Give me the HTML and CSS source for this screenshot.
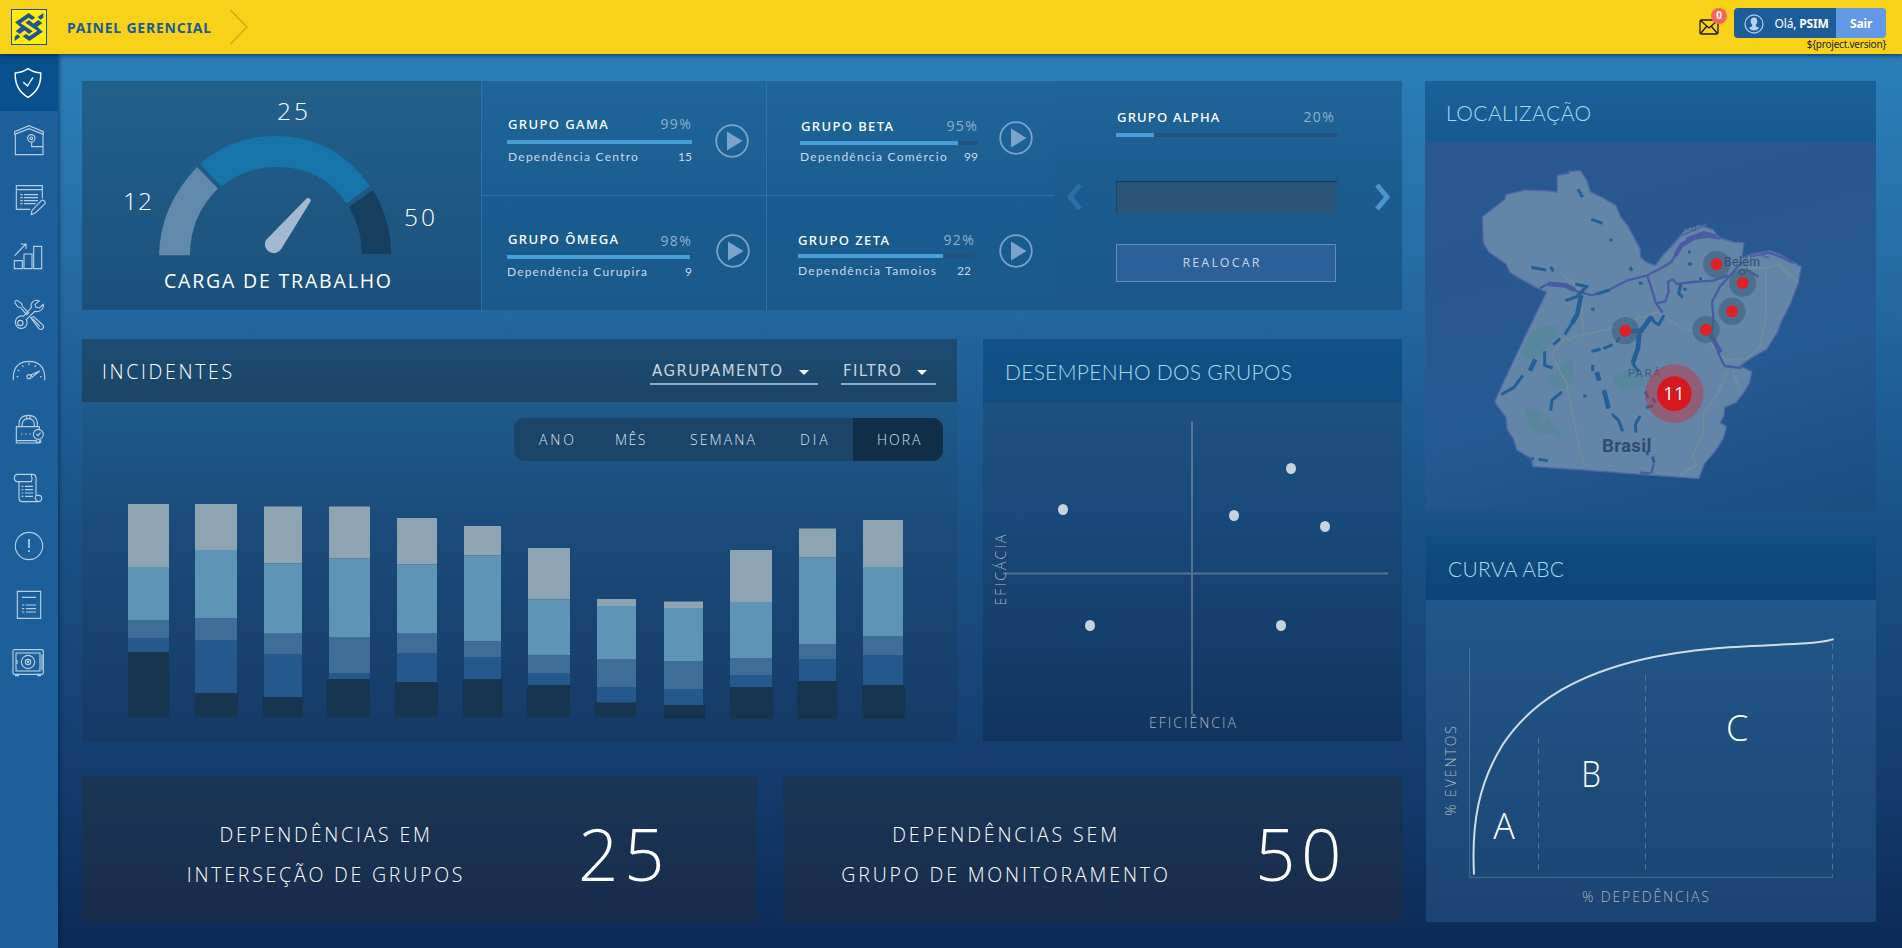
FILE: index.html
```html
<!DOCTYPE html>
<html lang="pt-BR">
<head>
<meta charset="utf-8">
<title>Painel Gerencial</title>
<link rel="stylesheet" href="styles.css">
</head>
<body>
<header class="topbar">
  <div class="brand">
    <svg class="logo" viewBox="0 0 108 108">
      <rect x="1.5" y="1.5" width="105" height="105" fill="#fcee0a" stroke="#1d4f91" stroke-width="3"/>
      <g fill="#1f549b">
        <path d="M12 40 53 12l20 14-10 7-10-7-24 17 36 24-11 8z"/>
        <path d="M96 68 55 96 35 82l10-7 10 7 24-17-36-24 11-8z"/>
        <path d="M14 66 30 54l12 9-16 12zM94 42 78 54l-12-9 16-12z"/>
        <path d="M80 24 97 12v14l-9 6zM28 84 11 96V83l9-7z"/>
      </g>
    </svg>
    <h1 class="brand-title">PAINEL GERENCIAL</h1>
    <svg class="crumb" viewBox="0 0 18 36"><path d="M0 .5 17 18 0 35.500" fill="none" stroke="#c9a416" stroke-width="1.200"/></svg>
  </div>
  <div class="session">
    <div class="mail">
      <svg viewBox="0 0 20 16" class="mail-icon"><path d="M1 2.500Q1 1 2.500 1h15Q19 1 19 2.500v11q0 1.500-1.500 1.500h-15Q1 15 1 13.500zM2 2l8 7 8-7M2 14l5.500-6.500M18 14l-5.500-6.500" fill="none" stroke="#1c1a0c" stroke-width="1.300"/></svg>
      <span class="badge">0</span>
    </div>
    <div class="account">
      <div class="user">
        <span class="user-info">
          <svg viewBox="0 0 20 20" class="avatar"><circle cx="10" cy="10" r="9" fill="none" stroke="#a9c6e3" stroke-width="1.300"/><path d="M10 3.500c2.300 0 3.300 1.600 3.300 3.700 0 1.500-.7 2.800-1.500 3.500v1.600l3.200 1.500c-1 1.800-3 2.800-5 2.800s-4-1-5-2.800l3.200-1.500v-1.600C7.400 10 6.700 8.700 6.700 7.200c0-2.100 1-3.700 3.300-3.700z" fill="#b9d3ec"/></svg>
          <span>Olá, <b>PSIM</b></span>
        </span>
        <a class="logout">Sair</a>
      </div>
      <span class="version">${project.version}</span>
    </div>
  </div>
</header>
<div class="shell">
<nav class="sidebar">
  <a class="nav-item active"><svg viewBox="0 0 174 171"><path d="M84 44Q66 56 46 57Q43 106 84 130Q125 106 122 57Q102 56 84 44z" stroke-width="4.500"/><path d="m70 84 12 12 17-26" stroke-width="4"/></svg></a>
  <a class="nav-item"><svg viewBox="0 0 174 174"><path d="M46 68v63h83V68M44 70V62L87 44l43 18v8L87 53zM95 93v14h33"/><circle cx="94" cy="82" r="11"/><circle cx="94" cy="82" r="4"/></svg></a>
  <a class="nav-item"><svg viewBox="0 0 174 174"><path d="M127 88V50H49v71h42M49 62h78M61 77h7M61 86h7M61 95h7M61 104h7M72 77h42M72 86h42M72 95h42M72 104h35M96 124l28-29q4-3 8 0t4 8l-30 29-12 5z"/></svg></a>
  <a class="nav-item"><svg viewBox="0 0 174 174"><path d="M43 101h24v24H43zM72 81h24v44H72zM101 58h24v67h-24zM44 86l33-35M62 51h16v15"/></svg></a>
  <a class="nav-item"><svg viewBox="0 0 174 174"><path d="M47 47q-4 2-2 7l9 12 8 2 18 21 6-5-19-20-2-8-12-9q-3-2-6 0zM92 98l24 32q5 6 11 2t2-12l-28-25zM98 101l22 24"/><path d="M118 48q-14-6-22 5-5 8-2 15L70 94q-10-4-18 4t-5 19q5 14 18 13t16-15q1-6-2-11l25-25q10 3 18-3 10-8 8-18l-12 11-10-2-3-9z"/><circle cx="61" cy="114" r="8"/></svg></a>
  <a class="nav-item"><svg viewBox="0 0 174 174"><path d="M40 112V98q4-42 47-43 43 1 47 43v14"/><path d="M50 101h5M53 81l5 3M67 67l3 5M87 61v6M107 67l-3 5M120 101h5"/><circle cx="87" cy="101" r="6"/><path d="m92 96 27-12-22 18z"/></svg></a>
  <a class="nav-item"><svg viewBox="0 0 174 174"><path d="M118 88V77H49v49h69v-8M49 119h60M57 76q-2-33 28-33t27 33M66 76q-1-23 19-23t18 23M63 99h4M76 99h4M89 99h4M80 44v8M90 44v8M109 116v8h13v-8"/><circle cx="115" cy="100" r="15"/><path d="m109 99 5 5 8-9"/></svg></a>
  <a class="nav-item"><svg viewBox="0 0 174 174"><path d="M57 68H50q-7-2-7-11t8-11h49q8 1 8 11v52h9q8 0 8 9t-9 10H66q-8-1-9-9zM57 68h37q4-8 0-20M109 109q-4 3-3 10t9 9M65 82h5M75 82h24M65 92h5M75 92h24M65 102h5M75 102h24M65 112h5M75 112h24"/></svg></a>
  <a class="nav-item"><svg viewBox="0 0 174 174"><circle cx="87" cy="87" r="41"/><path d="M87 66v27M87 100v5" stroke-width="5"/></svg></a>
  <a class="nav-item"><svg viewBox="0 0 174 174"><path d="M52 49h70v81H52zM66 67h42M66 90h7M66 101h7M66 111h7M78 90h30M78 101h30M78 111h30"/></svg></a>
  <a class="nav-item"><svg viewBox="0 0 174 174"><rect x="39" y="50" width="91" height="74" rx="5"/><rect x="48" y="60" width="72" height="54"/><circle cx="84" cy="87" r="20"/><circle cx="84" cy="87" r="8"/><circle cx="84" cy="87" r="2"/><path d="M47 125v3h10M112 128h9v-3M51 80v13M126 64v48"/></svg></a>
</nav>
<main class="dashboard">
  <div class="col-left">
    <section class="workload">
      <div class="gauge">
        <svg viewBox="82 81 399 229" class="fill">
          <path d="M159 255.300Q160 206 197 167l21 21.500Q190 216 190 255.300z" fill="#6189ab"/>
          <path d="M200 164Q231 136 275 136q60 0 95 50l-23.500 17.500Q323 167 276 167q-30 0-54.500 19.500z" fill="#1674aa"/>
          <path d="M373 190q18 30 18 64h-29q0-25-13-47z" fill="#163f5f"/>
          <path d="M266 240 306.500 198.500a2.600 2.600 0 0 1 4 3L281.500 248.500a8.600 8.600 0 1 1-15.500-8.500z" fill="#a3b9cf"/>
          <g class="gauge-text">
            <text x="277" y="120" textLength="31">25</text>
            <text x="123" y="210" textLength="29">12</text>
            <text x="404" y="225.500" textLength="31">50</text>
            <text x="164" y="288" textLength="227" class="gauge-caption">CARGA DE TRABALHO</text>
          </g>
        </svg>
      </div>
      <div class="groups">
        <div class="cell gama">
          <div class="stat">
            <div class="row"><span class="name">GRUPO GAMA</span><span class="pct">99%</span></div>
            <div class="bar"><i style="width:100%"></i></div>
            <div class="row dep"><span>Dependência Centro</span><span class="count">15</span></div>
          </div>
          <svg class="play" viewBox="0 0 34 34"><circle cx="17" cy="17" r="15.800"/><path d="M12 7.500 27.500 17 12 26.500z"/></svg>
        </div>
        <div class="cell beta">
          <div class="stat">
            <div class="row"><span class="name">GRUPO BETA</span><span class="pct">95%</span></div>
            <div class="bar"><i style="width:89%"></i></div>
            <div class="row dep"><span>Dependência Comércio</span><span class="count">99</span></div>
          </div>
          <svg class="play" viewBox="0 0 34 34"><circle cx="17" cy="17" r="15.800"/><path d="M12 7.500 27.500 17 12 26.500z"/></svg>
        </div>
        <div class="cell omega">
          <div class="stat">
            <div class="row"><span class="name">GRUPO ÔMEGA</span><span class="pct">98%</span></div>
            <div class="bar"><i style="width:99%"></i></div>
            <div class="row dep"><span>Dependência Curupira</span><span class="count">9</span></div>
          </div>
          <svg class="play" viewBox="0 0 34 34"><circle cx="17" cy="17" r="15.800"/><path d="M12 7.500 27.500 17 12 26.500z"/></svg>
        </div>
        <div class="cell zeta">
          <div class="stat">
            <div class="row"><span class="name">GRUPO ZETA</span><span class="pct">92%</span></div>
            <div class="bar"><i style="width:82.500%"></i></div>
            <div class="row dep"><span>Dependência Tamoios</span><span class="count">22</span></div>
          </div>
          <svg class="play" viewBox="0 0 34 34"><circle cx="17" cy="17" r="15.800"/><path d="M12 7.500 27.500 17 12 26.500z"/></svg>
        </div>
      </div>
      <div class="realloc">
        <svg class="arrow prev" viewBox="0 0 17 28"><path d="M14 2 4 14l10 12"/></svg>
        <div class="realloc-body">
          <div class="row"><span class="name">GRUPO ALPHA</span><span class="pct">20%</span></div>
          <div class="bar"><i style="width:17.300%"></i></div>
          <div class="field"></div>
          <button class="action">REALOCAR</button>
        </div>
        <svg class="arrow next" viewBox="0 0 17 28"><path d="M3 2 13 14 3 26"/></svg>
      </div>
    </section>
    <div class="mid">
      <section class="incidents">
        <div class="inc-head">
          <h2 class="inc-title">INCIDENTES</h2>
          <div class="select group-by"><span>AGRUPAMENTO</span><i class="caret"></i></div>
          <div class="select filter"><span>FILTRO</span><i class="caret"></i></div>
        </div>
        <div class="tabs">
          <a class="tab ano">ANO</a><a class="tab mes">MÊS</a><a class="tab semana">SEMANA</a><a class="tab dia">DIA</a><a class="tab hora on">HORA</a>
        </div>
        <svg class="inc-chart" viewBox="82 461 875 281">
          <g id="bars"></g>
        </svg>
      </section>
      <section class="performance">
        <h2 class="panel-title">DESEMPENHO DOS GRUPOS</h2>
        <svg class="fill" viewBox="983 402 419 339">
          <path d="M1192 421v293M1003 573.500h385" stroke="#8fa0ae" stroke-opacity=".5" stroke-width="2"/>
          <g fill="#c6d2de"><ellipse cx="1291" cy="468.500" rx="5" ry="5.500"/><ellipse cx="1063" cy="509.500" rx="5" ry="5.500"/><ellipse cx="1234" cy="515.500" rx="5" ry="5.500"/><ellipse cx="1325" cy="526.500" rx="5" ry="5.500"/><ellipse cx="1090" cy="625.500" rx="5" ry="5.500"/><ellipse cx="1281" cy="625.500" rx="5" ry="5.500"/></g>
          <text class="axis" x="1149" y="728" textLength="87">EFICIÊNCIA</text>
          <text class="axis" transform="translate(1006 605.500) rotate(-90)" textLength="71">EFICÁCIA</text>
        </svg>
      </section>
    </div>
    <div class="totals">
      <section class="total t1">
        <p class="total-label">DEPENDÊNCIAS EM<br>INTERSEÇÃO DE GRUPOS</p>
        <strong class="total-value">25</strong>
      </section>
      <section class="total t2">
        <p class="total-label">DEPENDÊNCIAS SEM<br>GRUPO DE MONITORAMENTO</p>
        <strong class="total-value">50</strong>
      </section>
    </div>
  </div>
  <div class="col-right">
    <section class="location">
      <h2 class="panel-title">LOCALIZAÇÃO</h2>
      <svg class="fill" viewBox="45 36 1353 1107">
        <path fill="#6386a8" stroke="#4f67a6" stroke-width="4" stroke-linejoin="round" d="M217 260 284 208 288 194 345 180 402 182 442 186 441 136 478 130 474 124 512 122 530 150 542 186 582 205 618 226 632 260 655 290 672 322 690 356 692 382 708 396 736 406 758 376 796 336 826 298 866 286 908 298 930 324 970 336 1002 338 996 384 1024 372 1080 362 1112 374 1142 392 1174 410 1164 462 1142 520 1114 574 1104 604 1070 658 1030 680 990 708 1026 724 1018 760 1004 784 978 818 944 832 942 858 930 878 950 890 940 926 914 966 884 1000 866 1046 700 1034 520 1020 368 1010 364 986 320 960 310 926 292 900 288 862 262 828 254 814 330 650 410 486 388 478 330 446 300 428 288 402 236 366 220 338z"/>
        <g fill="#57879b" opacity=".85"><path d="M368 604q30-18 72-16l-4 30-22 30-20 26-40 14-22-8 14-40zM460 692l28-2 2 60-30 26-30-6-28-26 40-14zM346 840l30-4 18 10v30l20-16 18 26 26 14-10 30-22-20-40 4-26-20z"/><ellipse cx="657" cy="752" rx="44" ry="30"/></g>
        <path fill="none" stroke="#748f98" stroke-width="4" d="M458 436 492 458 520 498 514 550 522 614M424 674 470 760 490 860 510 960 524 1010M424 674 460 630 522 614 592 598 662 572 740 546 820 598 860 606 900 640 945 690 1010 686 1050 650 1068 560V420M950 724 925 790 880 850 880 910 846 980 860 1004 810 1034M1010 414H1068L1110 402 1166 456M968 722 990 780M1104 404 1140 440"/>
        <g fill="none" stroke="#4a5ba3" stroke-linejoin="round"><path stroke-width="7" d="M388 476 420 458 470 464 500 484 546 496 600 478 650 452 712 436 750 416 784 396 810 350 850 326 900 320 930 326M712 438 726 480 738 520 758 548M738 520 766 514 776 484 774 456 788 448 800 462 850 456 910 452 955 436M996 396 966 430 930 470 906 516 910 560 906 620 930 680 944 708 994 714M1020 380 1076 368 1116 382 1150 400M1006 416 1046 440M724 1030 732 1000M690 1028 720 1030"/><path stroke-width="14" d="M414 462 466 466 494 480M796 376 814 346 850 324M830 330 880 310 920 320M902 612 920 646 932 668"/></g>
        <path fill="none" stroke="#5266a5" stroke-width="5" d="M782 352 810 318 840 306 890 282M1024 378 1050 374 1078 384"/>
        <g fill="none" stroke="#235f98"><path stroke-width="14" d="M514 494 502 552 486 580M376 688 360 722M560 726 568 752M582 780 596 836M688 604 684 654 668 700M662 604 694 602 724 560"/><path stroke-width="9" d="M486 580 464 614M450 626 430 644M466 512 500 500 530 470 496 462M600 480 560 492M338 736 312 772 274 794M404 664V706L428 714M456 786 426 810 422 842M548 704V724M606 852 626 872 638 904M544 664 572 658M580 656 608 644M620 638 628 622M724 560 732 576 746 584 762 556M668 700 684 724M690 858 676 884 678 908M706 784 714 804M708 832 730 828M728 804 736 818M504 178 518 202M544 268 578 280M364 412 408 420M422 410 430 424M598 330H608M660 412 666 422M686 460H698M812 464 806 490 818 502M820 478H830M386 988 414 992M364 986H372M728 980 732 998M712 962V976M544 538H554M520 798H530M834 402H846M834 366H842M868 446H876"/></g>
        <circle cx="996" cy="426" r="8" fill="none" stroke="#304d71" stroke-width="4"/>
        <g fill="#3c617e" opacity=".6"><circle cx="920" cy="403" r="41"/><circle cx="998" cy="459" r="41"/><circle cx="966" cy="544" r="41"/><circle cx="888" cy="599" r="41"/><circle cx="646" cy="602" r="41"/></g>
        <g fill="#e02028"><circle cx="920" cy="403" r="18"/><circle cx="998" cy="459" r="18"/><circle cx="966" cy="544" r="18"/><circle cx="888" cy="599" r="18"/><circle cx="646" cy="602" r="18"/></g>
        <g class="map-text"><text x="942" y="408" textLength="108" font-size="37">Belém</text><text x="653" y="741" textLength="98" font-size="34" opacity=".7">PARÁ</text><text x="576" y="965" textLength="148" font-size="56" font-weight="700">Brasil</text><text x="830" y="302" font-size="26" opacity=".7">I.d.</text></g>
        <circle cx="793" cy="791" r="88" fill="#c0354b" opacity=".5"/><circle cx="793" cy="791" r="52" fill="#d8181f"/>
        <text x="760" y="810" textLength="64" class="cluster">11</text>
      </svg>
    </section>
    <section class="abc">
      <h2 class="panel-title">CURVA ABC</h2>
      <svg class="fill" viewBox="48 210 1350 966">
        <path d="M179 354v688h1090" fill="none" stroke="#6489ad" stroke-opacity=".6" stroke-width="3"/>
        <g stroke="#6489ad" stroke-opacity=".7" stroke-width="3" stroke-dasharray="17 14.500"><path d="M385.500 624v411M706.500 435v600M1267.500 340v700"/></g>
        <path d="M192 1034C184 880 206 760 278 644 370 504 520 428 706 386 900 345 1040 350 1190 340 1240 336 1250 332 1271 328" fill="none" stroke="#cfdde6" stroke-width="6"/>
        <g class="zones"><text x="250" y="928" textLength="69">A</text><text transform="translate(514 771) scale(.87 1)">B</text><text x="948" y="632">C</text></g>
        <text class="axis big" x="516" y="1117" textLength="381">% DEPEDÊNCIAS</text>
        <text class="axis big" transform="translate(137 857) rotate(-90)" textLength="269">% EVENTOS</text>
      </svg>
    </section>
  </div>
</main>
</div>
<script src="chart.js"></script>
</body>
</html>
```

FILE: chart.js
```js
// Each entry: [x, width, top, four segment boundaries, bottom, base x, base width]
const incidents = [
  [128, 41, 504, 567, 620, 638, 652, 717, 128, 41],
  [195, 42, 504, 550, 618.5, 640, 693, 717, 195, 43],
  [264, 38, 506.5, 563.5, 633, 654, 697, 717, 263, 40],
  [329, 41, 506.5, 558.5, 637, 673, 679, 717, 327, 43],
  [397, 40, 518, 564.5, 633, 653, 682, 717, 395, 43],
  [464, 37, 526, 555.5, 641.5, 657.5, 679, 717, 463, 40],
  [528, 42, 548, 599.5, 655.5, 673, 685, 717, 527, 43],
  [597, 39, 599, 606, 659, 687, 702.5, 717, 595, 41],
  [664, 39, 601.5, 608, 661.5, 689, 705, 719, 664, 41],
  [730, 42, 550, 602, 658, 675, 687, 719, 730, 43],
  [799, 37, 528.5, 557.5, 644, 659.5, 681, 719, 797, 40],
  [863, 40, 520, 567, 636, 655.5, 685, 719, 862, 43]
];
const colors = ['#8fa4b2', '#5e94b6', '#3e6e97', '#25588c', '#183550'];
const host = document.getElementById('bars');
for (const b of incidents) {
  colors.forEach((color, i) => {
    const r = document.createElementNS('http://www.w3.org/2000/svg', 'rect');
    const base = i === 4;
    r.setAttribute('x', base ? b[8] : b[0]);
    r.setAttribute('width', base ? b[9] : b[1]);
    r.setAttribute('y', b[2 + i]);
    r.setAttribute('height', b[3 + i] - b[2 + i]);
    r.setAttribute('fill', color);
    host.appendChild(r);
  });
}
```

FILE: styles.css
```css
* { box-sizing: border-box; }
body { margin: 0; width: 1902px; height: 948px; overflow: hidden; font-family: "Open Sans", "Noto Sans", sans-serif; color: #fff; display: flex; flex-direction: column; }
h1, h2, p { margin: 0; font-weight: 400; }
svg { display: block; flex: none; }
span { white-space: nowrap; }
.fill { width: 100%; flex: 1; min-height: 0; }

.topbar { height: 54px; background: #f8d119; display: flex; justify-content: space-between; position: relative; z-index: 2; box-shadow: 0 1px 5px rgba(0, 20, 50, .75); }
.brand { display: flex; padding: 9px 0 0 11px; }
.logo { width: 36px; height: 36px; }
.brand-title { margin-left: 20px; width: 163px; font: 700 14px/38px "Noto Sans", sans-serif; letter-spacing: .8px; white-space: nowrap; color: #1c5b93; }
.crumb { width: 18px; height: 36px; }
.session { display: flex; padding: 8px 16px 0 0; }
.mail { position: relative; width: 35px; padding-top: 11px; }
.mail-icon { width: 20px; height: 16px; }
.badge { position: absolute; left: 12px; top: 0; width: 16px; height: 16px; border-radius: 50%; background: #f9635b; font: 700 10px/15px "Noto Sans", sans-serif; text-align: center; }
.account { display: flex; flex-direction: column; }
.user { display: flex; width: 152px; height: 30px; border-radius: 4px; overflow: hidden; font: 12px/31px "Noto Sans", sans-serif; letter-spacing: -.15px; }
.user-info { display: flex; width: 102px; background: #1c5c98; }
.avatar { width: 20px; height: 20px; margin: 6px 11px 0 9.500px; }
.logout { width: 50px; background: #6398e6; padding-left: 14px; font-weight: 700; }
.version { font: 10px/12px "Noto Sans", sans-serif; letter-spacing: -.22px; color: #222; text-align: right; }

.shell { display: flex; flex: 1; }
.sidebar { width: 58px; background: #1c5f9b; position: relative; z-index: 1; box-shadow: 1px 0 4px rgba(0, 20, 50, .6); }
.nav-item { display: block; height: 58px; }
.nav-item svg { width: 58px; height: 100%; fill: none; stroke: #b8cfe3; stroke-width: 3.400; }
.nav-item.active { height: 57px; background: #074f8d; }
.nav-item.active svg { stroke: #fff; }

.dashboard { flex: 1; display: flex; justify-content: space-between; padding: 27px 26px 26px 24px; background: linear-gradient(#2a7eb9 0, #2a7cb7 4%, #246ba3 25%, #1f6199 35%, #1b5488 50%, #164679 68%, #133d6e 80%, #0d2a58 100%); }
.col-left { width: 1320px; display: flex; flex-direction: column; }
.col-right { width: 451px; display: flex; flex-direction: column; }

.workload { display: flex; height: 229px; }
.gauge { width: 399px; display: flex; background: linear-gradient(#22608c, #1c507c); }
.gauge-text { font-size: 24.500px; font-weight: 300; fill: #fff; }
.gauge-caption { font-size: 19.500px; font-weight: 400; }
.groups { width: 573px; display: grid; grid-template-columns: 285px 288px; grid-template-rows: 115px 114px; background: linear-gradient(#1f669a, #1a5b8f 60%, #1a5a8b); border-left: 1px solid #2974ac; }
.cell { display: flex; align-items: flex-start; border-right: 1px solid #2974ac; }
.gama, .beta { border-bottom: 1px solid #2974ac; }
.row { display: flex; justify-content: space-between; font-size: 14px; line-height: 20px; }
.name { font-family: "Noto Sans", sans-serif; font-weight: 500; font-size: 13px; letter-spacing: 1.4px; padding-left: 1px; }
.pct { color: #8fb0cd; font-size: 14px; letter-spacing: 1.3px; }
.bar { height: 4px; margin: 6px 0 5px; background: #22527e; }
.bar i { display: block; height: 100%; background: #479fd6; }
.dep { font: 12px/16px Lato, sans-serif; letter-spacing: 1.25px; color: #ccd9e6; }
.count { letter-spacing: 0; }
.stat { width: 185px; }
.play { width: 34px; height: 34px; fill: #7ba3cb; }
.play circle { fill: none; stroke: #7ba3cb; stroke-width: 1.800; }
.gama { padding: 33px 0 0 25px; }
.gama .play { margin: 9.500px 0 0 23px; }
.gama .dep, .beta .name { padding-left: 1px; }
.beta { padding: 35px 0 0 33px; }
.beta .stat { width: 178px; }
.beta .bar { margin: 5px 0 4px; }
.beta .play { margin: 5px 0 0 21px; }
.omega { padding: 33px 0 0 25px; }
.omega .pct { line-height: 24px; }
.omega .row { height: 20px; }
.omega .play { margin: 5px 0 0 24px; }
.omega .row.dep { margin-top: 5px; height: 16px; }
.omega .dep { letter-spacing: 1.15px; }
.zeta { padding: 34px 0 0 31px; }
.zeta .name { padding-left: 0; }
.zeta .stat { width: 177px; }
.zeta .dep { padding-right: 4px; }
.zeta .bar { width: 176px; margin: 4px 0 5px; }
.zeta .play { margin: 4px 0 0 24px; }
.realloc { flex: 1; display: flex; padding-top: 26px; background: linear-gradient(#20659a, #1b5b8d 50%, #1b5889); }
.realloc-body { width: 221px; margin: 0 37px 0 33px; }
.realloc .name { letter-spacing: 1.2px; }
.realloc .pct { padding-right: 2px; }
.arrow { width: 17px; height: 28px; margin-top: 75.500px; fill: none; stroke: #4a96c8; stroke-width: 5; }
.prev { margin-left: 12px; stroke: #2c6ea6; }
.field { height: 32px; margin-top: 44px; background: #2a5478; border-top: 1px solid #14395a; border-left: 1px solid #1a4367; }
.action { display: block; width: 220px; height: 38px; margin-top: 31px; padding: 0 8px 0 0; background: #2b6099; border: 1px solid #5f8ebb; color: #c0d2e4; font: 12.500px/36px "Noto Sans", sans-serif; letter-spacing: 2.100px; }

.mid { display: flex; justify-content: space-between; height: 403px; margin-top: 29px; }
.incidents { width: 875px; display: flex; flex-direction: column; background: linear-gradient(#1e5a8a 63px, #1a4a79 50%, #153a67); }
.inc-head { display: flex; align-items: flex-start; height: 63px; background: linear-gradient(#1d4b73, #1a4566); padding-left: 20px; }
.inc-title { width: 548px; padding-top: 16px; font-size: 19.500px; font-weight: 300; line-height: 33px; letter-spacing: 2.650px; }
.select { display: flex; justify-content: space-between; height: 46px; padding: 21px 9px 0 2px; border-bottom: 2px solid #8fa8bc; font: 15px/22px "DejaVu Sans", sans-serif; letter-spacing: 1.400px; color: #c9d2db; }
.group-by { width: 168px; }
.filter { width: 95px; margin-left: 23px; }
.caret { border: 5px solid transparent; border-top-color: #fff; border-bottom: 0; margin-top: 10px; height: 5px; }
.tabs { display: flex; width: 429px; height: 43px; margin: 16px 0 0 432px; border-radius: 11px; overflow: hidden; background: #1a4568; }
.tab { padding-left: 25px; font-size: 14px; font-weight: 300; line-height: 43px; color: #dbe4ec; }
.ano { width: 76px; letter-spacing: 2.900px; }
.mes { width: 75px; letter-spacing: 1.500px; }
.semana { width: 110px; letter-spacing: 2.100px; }
.dia { width: 78px; letter-spacing: 2.900px; }
.hora { width: 90px; padding-left: 24px; letter-spacing: 2px; }
.tab.on { background: #112e48; }
.inc-chart { width: 875px; height: 281px; }

.performance { width: 419px; height: 402px; display: flex; flex-direction: column; background: linear-gradient(#1d5180 63px, #18497a 45%, #11345f); }
.panel-title { height: 63px; padding: 3px 0 0 22px; font: 300 21px/59px Lato, sans-serif; letter-spacing: .25px; color: #a6dcea; background: linear-gradient(#125287, #0f4c80); }
.axis { font-size: 14px; font-weight: 300; fill: #b3b3b8; }
.axis.big { font-size: 42px; }

.totals { display: flex; justify-content: space-between; margin-top: 34px; height: 146px; }
.total { display: flex; background: linear-gradient(#1a3654, #192c4c); }
.t1 { width: 675px; padding-left: 69px; }
.t2 { width: 619px; padding-left: 48px; }
.total-label { padding-top: 39px; text-align: center; font-size: 19.500px; font-weight: 300; line-height: 40px; width: 350px; letter-spacing: 2.780px; }
.total-value { font-size: 71px; font-weight: 300; line-height: 156px; margin-left: 77px; letter-spacing: 5.500px; }
.t2 .total-value { margin-left: 74px; }
.t2 .total-label { letter-spacing: 2.850px; }

.location { height: 430px; display: flex; flex-direction: column; background: linear-gradient(165deg, #29578f 30%, #265a92 65%, #1a4d80); }
.location .panel-title { height: 61px; background: linear-gradient(#1a6199, #155b92); padding: 2px 0 0 21px; letter-spacing: .450px; }
.map-text { font-family: Roboto, sans-serif; fill: #2f4c70; }
.cluster { font: 56px "Open Sans", sans-serif; fill: #fff; }
.abc { height: 386px; margin: 25px 0 0 1px; display: flex; flex-direction: column; background: linear-gradient(#225789 64px, #1a4474); }
.abc .panel-title { height: 64px; background: linear-gradient(#104d80, #0d4378); }
.zones { font-size: 108px; font-weight: 300; fill: #fff; }
```
